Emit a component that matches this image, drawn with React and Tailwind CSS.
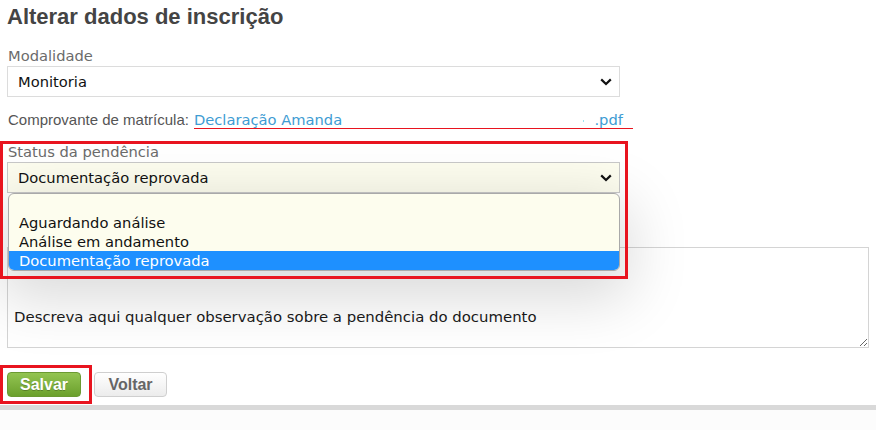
import { useState } from 'react';

const verdana = { fontFamily: '"DejaVu Sans", Verdana, sans-serif' };

function Chevron() {
  return (
    <svg width="12" height="8" viewBox="0 0 12 8" className="shrink-0">
      <path d="M1.2 1.4 L6 6 L10.8 1.4" fill="none" stroke="#111" strokeWidth="2.2" />
    </svg>
  );
}

function FakeSelect({ value, className }) {
  return (
    <div className={`flex items-center justify-between h-[31px] w-[613px] border pl-[10px] pr-[7px] ${className}`}>
      <span className="text-[14.7px] leading-[18px] text-[#111]" style={verdana}>{value}</span>
      <Chevron />
    </div>
  );
}

export default function App() {
  const [status] = useState('Documentação reprovada');
  const options = ['', 'Aguardando análise', 'Análise em andamento', 'Documentação reprovada'];

  return (
    <div className="w-[876px] h-[430px] bg-white flex flex-col font-['Liberation_Sans',Arial,sans-serif]">
      <div className="relative flex flex-col px-[7px]">
        <h1 className="mt-[4px] text-[22px] leading-[26px] font-bold text-[#444]">Alterar dados de inscrição</h1>

        {/* Modalidade */}
        <label className="mt-[17px] pl-[1px] text-[14.7px] leading-[18px] text-[#6b6b6b]" style={verdana}>Modalidade</label>
        <FakeSelect value="Monitoria" className="mt-[1px] bg-white border-[#dcdcdc]" />

        {/* Comprovante */}
        <div className="mt-[14px] pl-[1px] text-[15px] leading-[18px] text-[#555] flex items-baseline">
          <span>Comprovante de matrícula:</span>
          <span className="ml-[5px] w-[439px] flex items-baseline border-b border-[#e8141f] text-[#3e9cd3] text-[14.7px] leading-[17px]" style={verdana}>
            <span>Declaração Amanda</span>
            <span className="ml-auto mr-[10px] relative">
              <span className="absolute left-[-11px] top-[9px] w-[1px] h-[2px] bg-[#9be4f0]"></span>
              .pdf
            </span>
          </span>
        </div>

        {/* Status da pendência */}
        <div className="relative mt-[14px] flex flex-col">
          <label className="pl-[1px] text-[14.7px] leading-[18px] text-[#6b6b6b]" style={verdana}>Status da pendência</label>
          <FakeSelect value={status} className="mt-[1px] bg-[#fdfdef] border-[#c8c8c8]" />

          <div
            className="absolute z-20 left-[1px] top-[50px] w-[612px] bg-[#fdfdee] border border-[#a9a9a9] rounded-[6px] overflow-hidden shadow-[0_18px_60px_10px_rgba(0,0,0,0.15)]"
            style={verdana}
          >
            {options.map((opt) => (
              <div
                key={opt || 'empty'}
                className={`h-[19px] pl-[10px] text-[14.7px] leading-[19px] ${opt === status ? 'bg-[#1e90ff] text-white' : 'text-[#111]'}`}
              >
                {opt}
              </div>
            ))}
          </div>

          {/* annotation */}
          <div className="absolute z-30 left-[-7px] top-[-2px] w-[628px] h-[138px] border-[3px] border-[#e8141f] pointer-events-none"></div>
        </div>

        <textarea
          readOnly
          defaultValue="Descreva aqui qualquer observação sobre a pendência do documento"
          className="mt-[54px] w-[862px] h-[101px] border border-[#d4d4d4] bg-white pl-[6px] pt-[60px] text-[14.9px] leading-[18px] text-[#1a1a1a] outline-none"
          style={verdana}
        />

        <div className="mt-[24px] flex gap-[13px]">
          <div className="relative">
            <button className="h-[25px] w-[74px] rounded-[4px] border border-[#6b9a32] bg-gradient-to-b from-[#93c451] to-[#6ba02c] text-white text-[16px] font-bold leading-none [text-shadow:0_1px_0_rgba(0,0,0,0.25)]">
              Salvar
            </button>
            <div className="absolute left-[-7px] top-[-7px] w-[92px] h-[39px] border-[3px] border-[#e8141f] pointer-events-none"></div>
          </div>
          <button className="h-[25px] w-[73px] rounded-[4px] border border-[#cfcfcf] bg-gradient-to-b from-white to-[#ececec] text-[#666] text-[16px] font-bold leading-none">
            Voltar
          </button>
        </div>
      </div>

      <div className="mt-[8px] h-[5px] bg-[#d9d9d9]"></div>
      <div className="flex-1 bg-[#fcfcfc]"></div>
    </div>
  );
}
